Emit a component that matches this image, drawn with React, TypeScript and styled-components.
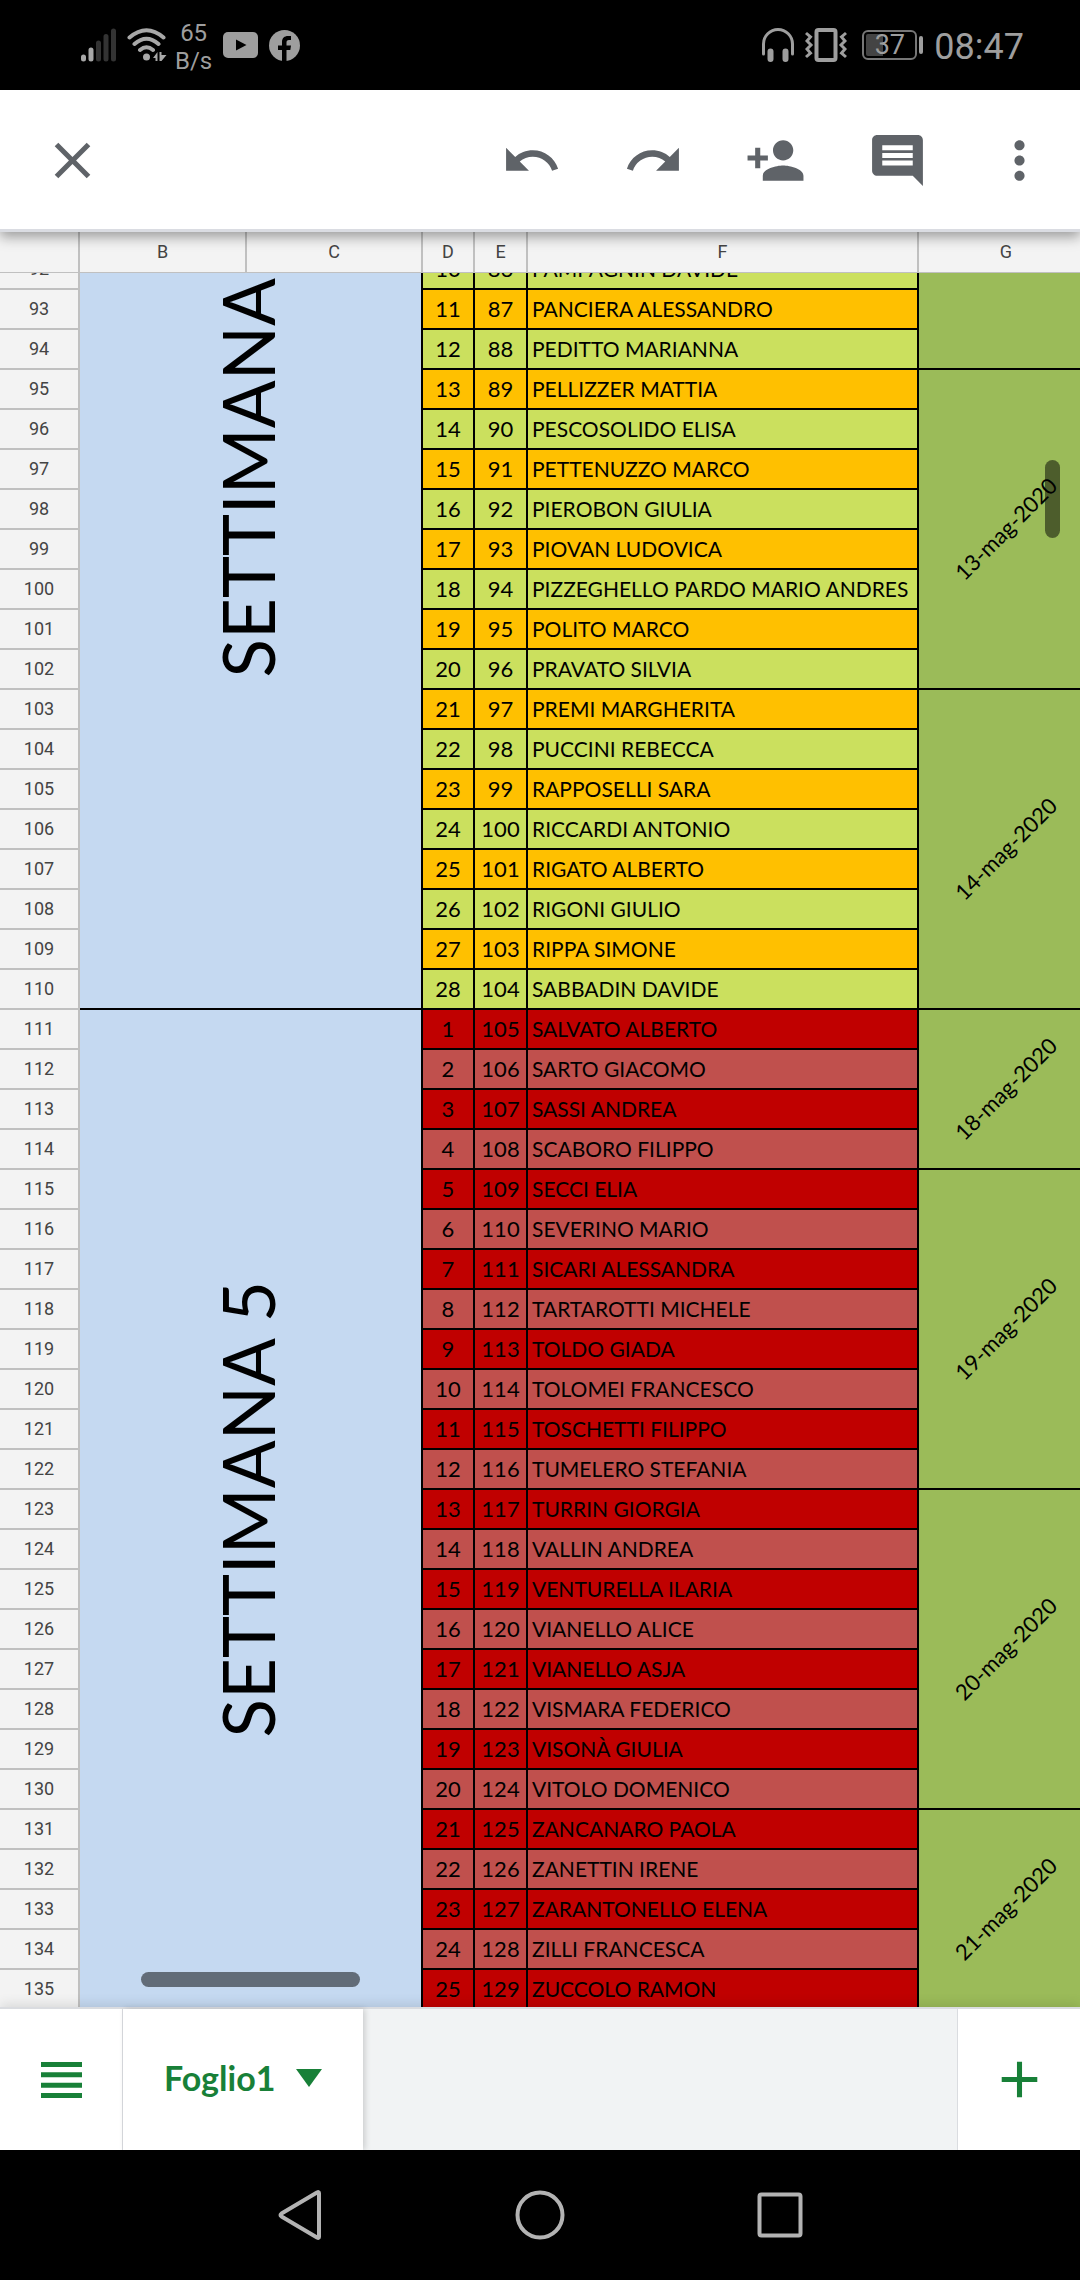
import React, { useLayoutEffect, useRef } from "react";
import styled, { createGlobalStyle } from "styled-components";
import {
  MdAdd,
  MdClose,
  MdComment,
  MdMoreVert,
  MdPersonAdd,
  MdRedo,
  MdUndo,
} from "react-icons/md";

const color = {
  icon: "#5f6368",
  accent: "#188038",
  status: "#9e9e9e",
  header: "#f3f3f3",
  headerLine: "#c0c0c0",
  week: "#c5d9f1",
  day: "#9bbb59",
};

const GlobalStyle = createGlobalStyle`
  *, *::before, *::after { box-sizing: border-box; }
  body { margin: 0; background: #000; font-family: Roboto, sans-serif; }
  button { border: 0; padding: 0; margin: 0; background: none; font: inherit; color: inherit; cursor: pointer; }
`;

const Screen = styled.div`
  display: flex;
  flex-direction: column;
  height: 100vh;
  background: #000;
`;

/* ---------- Status bar ---------- */

const StatusBar = styled.header`
  display: flex;
  flex: none;
  align-items: center;
  justify-content: space-between;
  height: 90px;
  padding: 0 56px 0 80px;
  color: ${color.status};
`;

const StatusGroup = styled.div`
  display: flex;
  align-items: center;
  gap: 11px;
`;

const NetSpeed = styled.div`
  margin-left: -3px;
  padding-top: 4px;
  font-size: 24px;
  line-height: 28px;
  text-align: center;
`;

const Battery = styled.div`
  display: flex;
  align-items: center;
  gap: 2px;
  margin-left: 4px;

  &::after {
    content: "";
    width: 4px;
    height: 18px;
    border-radius: 2px;
    background: ${color.status};
  }
`;

const BatteryBody = styled.div`
  display: flex;
  align-items: center;
  justify-content: center;
  width: 55px;
  height: 30px;
  border: 2px solid #777;
  border-radius: 6px;
  font-size: 27px;
  line-height: 30px;
  background: linear-gradient(90deg, #444 37%, transparent 37%) content-box;
  padding: 2px;
`;

const Clock = styled.time`
  padding-top: 4px;
  font-size: 36px;
  line-height: 42px;
`;

/* ---------- Toolbar ---------- */

const Toolbar = styled.nav`
  position: relative;
  z-index: 3;
  display: flex;
  flex: none;
  justify-content: space-between;
  height: 142px;
  padding-top: 2px;
  background: #fff;
  border-bottom: 3px solid #dadce2;
  color: ${color.icon};
  box-shadow: 0 5px 12px rgba(0, 0, 0, 0.36);
`;

const ToolGroup = styled.div`
  display: flex;
`;

const ToolButton = styled.button<{ $width: number }>`
  display: flex;
  align-items: center;
  justify-content: center;
  width: ${(p) => p.$width}px;

  svg {
    width: 61px;
    height: 61px;
  }
`;

/* ---------- Sheet ---------- */

const SheetFrame = styled.main`
  position: relative;
  display: flex;
  flex-direction: column;
  flex: 1;
  min-height: 0;
  overflow: hidden;
  background: #fff;
`;

const SheetScroller = styled.div`
  flex: 1;
  min-height: 0;
  overflow: auto;
  scrollbar-width: none;
`;

const Sheet = styled.table`
  width: 1095px;
  min-width: 100%;
  table-layout: fixed;
  border-collapse: separate;
  border-spacing: 0;
`;

const Column = styled.col<{ $width: number }>`
  width: ${(p) => p.$width}px;
`;

const ColumnHead = styled.th`
  height: 41px;
  padding: 0;
  background: ${color.header};
  border-right: 2px solid ${color.headerLine};
  border-bottom: 1px solid ${color.headerLine};
  color: #444;
  font: 400 18px/24px Roboto, sans-serif;
`;

const RowHead = styled.th`
  height: 40px;
  padding: 0;
  background: ${color.header};
  border-right: 2px solid ${color.headerLine};
  border-bottom: 2px solid ${color.headerLine};
  color: #444;
  font: 400 18px/24px Roboto, sans-serif;
`;

const BodyCell = styled.td`
  padding: 0;
  border-right: 2px solid #000;
  border-bottom: 2px solid #000;
  color: #000;
  font: 400 22px/28px Lato, sans-serif;
`;

const DataCell = styled(BodyCell)<{ $fill: string; $name?: boolean }>`
  background: ${(p) => p.$fill};
  text-align: ${(p) => (p.$name ? "left" : "center")};
  padding-left: ${(p) => (p.$name ? 4 : 0)}px;
  font-size: ${(p) => (p.$name ? 21 : 22)}px;
  white-space: nowrap;
`;

const WeekCell = styled(BodyCell)<{ $trailing?: number }>`
  background: ${color.week};
  vertical-align: ${(p) => (p.$trailing ? "bottom" : "middle")};
  padding-right: 6px;
  padding-bottom: ${(p) => p.$trailing ?? 0}px;
`;

const WeekLabel = styled.div`
  margin: 0 auto;
  width: 90px;
  writing-mode: vertical-rl;
  transform: rotate(180deg);
  font-size: 71px;
  line-height: 90px;
  white-space: nowrap;
`;

const DayCell = styled(BodyCell)`
  background: ${color.day};
  text-align: center;
`;

const DayLabel = styled.div`
  transform: rotate(-45deg);
  white-space: nowrap;
`;

const ScrollThumb = styled.div<{ $axis: "x" | "y" }>`
  position: absolute;
  z-index: 2;
  border-radius: 8px;
  background: rgba(0, 0, 0, 0.5);
  ${(p) =>
    p.$axis === "x"
      ? "left: 141px; bottom: 20px; width: 219px; height: 15px;"
      : "right: 20px; top: 228px; width: 15px; height: 78px;"}
`;

/* ---------- Tabs and system navigation ---------- */

const TabBar = styled.footer`
  position: relative;
  z-index: 3;
  display: flex;
  flex: none;
  height: 143px;
  border-top: 2px solid #dadce0;
  background: #f1f3f4;
  color: ${color.accent};
  box-shadow: 0 -2px 12px rgba(0, 0, 0, 0.12);
`;

const AllSheetsButton = styled.button`
  display: flex;
  align-items: center;
  justify-content: center;
  width: 123px;
  background: #fff;
  border-right: 1px solid #dadce0;
`;

const SheetTab = styled.button`
  display: flex;
  align-items: center;
  gap: 21px;
  padding: 0 41px 4px;
  background: #fff;
  box-shadow: 2px 0 6px rgba(0, 0, 0, 0.16);
  font: 700 34px/42px Lato, sans-serif;
`;

const AddSheetButton = styled.button`
  display: flex;
  align-items: center;
  justify-content: center;
  width: 123px;
  margin-left: auto;
  background: #fff;
  border-left: 1px solid #dadce0;

  svg {
    width: 61px;
    height: 61px;
  }
`;

const SystemNav = styled.nav`
  display: flex;
  flex: none;
  justify-content: center;
  height: 130px;
`;

const SystemButton = styled.button`
  display: flex;
  align-items: center;
  justify-content: center;
  width: 240px;
`;

/* ---------- Data ---------- */

const names = [
  "PAMPAGNIN DAVIDE", "PANCIERA ALESSANDRO", "PEDITTO MARIANNA", "PELLIZZER MATTIA",
  "PESCOSOLIDO ELISA", "PETTENUZZO MARCO", "PIEROBON GIULIA", "PIOVAN LUDOVICA",
  "PIZZEGHELLO PARDO MARIO ANDRES", "POLITO MARCO", "PRAVATO SILVIA", "PREMI MARGHERITA",
  "PUCCINI REBECCA", "RAPPOSELLI SARA", "RICCARDI ANTONIO", "RIGATO ALBERTO",
  "RIGONI GIULIO", "RIPPA SIMONE", "SABBADIN DAVIDE", "SALVATO ALBERTO",
  "SARTO GIACOMO", "SASSI ANDREA", "SCABORO FILIPPO", "SECCI ELIA", "SEVERINO MARIO",
  "SICARI ALESSANDRA", "TARTAROTTI MICHELE", "TOLDO GIADA", "TOLOMEI FRANCESCO",
  "TOSCHETTI FILIPPO", "TUMELERO STEFANIA", "TURRIN GIORGIA", "VALLIN ANDREA",
  "VENTURELLA ILARIA", "VIANELLO ALICE", "VIANELLO ASJA", "VISMARA FEDERICO",
  "VISONÀ GIULIA", "VITOLO DOMENICO", "ZANCANARO PAOLA", "ZANETTIN IRENE",
  "ZARANTONELLO ELENA", "ZILLI FRANCESCA", "ZUCCOLO RAMON",
];

const FIRST_ROW = 92;
const WEEK_5_ROW = 111;
const SCROLL_OFFSET = 23;
const columnWidths = [80, 167, 176, 52, 53, 391, 176];

const weeks: Record<number, { label: string; span: number; trailing?: number }> = {
  92: { label: "SETTIMANA", span: 19, trailing: 330 },
  111: { label: "SETTIMANA 5", span: 25 },
};

const days: Record<number, { label: string; span: number }> = {
  92: { label: "", span: 3 },
  95: { label: "13-mag-2020", span: 8 },
  103: { label: "14-mag-2020", span: 8 },
  111: { label: "18-mag-2020", span: 4 },
  115: { label: "19-mag-2020", span: 8 },
  123: { label: "20-mag-2020", span: 8 },
  131: { label: "21-mag-2020", span: 5 },
};

const rows = names.map((name, i) => {
  const row = FIRST_ROW + i;
  const lastWeek = row >= WEEK_5_ROW;
  const even = row % 2 === 0;
  return {
    row,
    name,
    turn: lastWeek ? row - WEEK_5_ROW + 1 : row - 82,
    order: row - 6,
    fill: lastWeek ? (even ? "#c0504d" : "#c00000") : even ? "#cbe05e" : "#ffc000",
  };
});

/* ---------- Drawings ---------- */

const SignalIcon = () => (
  <svg width="36" height="34" viewBox="0 0 36 34" strokeWidth="5" strokeLinecap="round">
    <path d="M3.5 29v2M11 22v9" stroke="#a8a8a8" />
    <path d="M18.500 15v16M26 8.500v22.500M33.500 3v28" stroke="#333" />
  </svg>
);

const WifiIcon = () => (
  <svg width="40" height="34" viewBox="0 0 40 34" fill="none" stroke="#a8a8a8" strokeWidth="4" strokeLinecap="round">
    <path d="M2.500 9.500Q19.500-5 36.500 9.500M7.500 16Q19.500 5.500 31.500 16M13 22Q19.500 16.500 26 22" />
    <circle cx="19.500" cy="29" r="3.500" fill="#a8a8a8" stroke="none" />
    <path d="M26 30L30.500 24V33H28.500V30ZM32.500 24V33H34.500L39.500 27H34.500V24Z" fill="#a8a8a8" stroke="none" />
  </svg>
);

const YouTubeIcon = () => (
  <svg width="35" height="26" viewBox="0 0 35 26">
    <rect width="35" height="26" rx="5" fill={color.status} />
    <path d="M13 7.500L23.500 13L13 18.500Z" fill="#000" />
  </svg>
);

const FacebookIcon = () => (
  <svg width="31" height="31" viewBox="0 0 31 31">
    <circle cx="15.500" cy="15.500" r="15.500" fill={color.status} />
    <path d="M13 31V20H9V15.500H13V12C13 8 15.500 6 19 6H22V10H20C18 10 17.500 11 17.500 12.500V15.500H22L21.300 20H17.500V31Z" fill="#000" />
  </svg>
);

const HeadphonesIcon = () => (
  <svg width="32" height="34" viewBox="0 0 32 34" fill="none" stroke={color.status} strokeLinecap="round">
    <path d="M1.500 26V16A14.500 14.500 0 0 1 30.500 16V26" strokeWidth="3" />
    <path d="M8.500 23.500V31M23.500 23.500V31" strokeWidth="6" />
  </svg>
);

const VibrateIcon = () => (
  <svg width="42" height="34" viewBox="0 0 42 34" fill="none" stroke={color.status} strokeWidth="3">
    <rect x="11.500" y="2" width="19" height="30" rx="2" strokeWidth="4" />
    <path d="M1 5L5.500 9L2 13L6 17L2 21L5.500 25L1 29M41 5L36.500 9L40 13L36 17L40 21L36.500 25L41 29" />
  </svg>
);

const ListIcon = () => (
  <svg width="41" height="36" viewBox="0 0 41 36" fill="none" stroke="currentColor" strokeWidth="5">
    <path d="M0 2.500H41M0 12.800H41M0 23.200H41M0 33.500H41" />
  </svg>
);

const CaretIcon = () => (
  <svg width="26" height="18" viewBox="0 0 26 18" fill="currentColor">
    <path d="M0 0H26L13 18Z" />
  </svg>
);

const navStroke = { fill: "none", stroke: "#b3b3b3", strokeWidth: 4, strokeLinejoin: "round" as const };

const SheetColumns = () => (
  <colgroup>
    {columnWidths.map((width, i) => (
      <Column key={i} $width={width} />
    ))}
  </colgroup>
);

export default function App() {
  const scroller = useRef<HTMLDivElement>(null);

  useLayoutEffect(() => {
    if (scroller.current) scroller.current.scrollTop = SCROLL_OFFSET;
  }, []);

  return (
    <Screen>
      <GlobalStyle />
      <StatusBar>
        <StatusGroup>
          <SignalIcon />
          <WifiIcon />
          <NetSpeed>
            65
            <br />
            B/s
          </NetSpeed>
          <YouTubeIcon />
          <FacebookIcon />
        </StatusGroup>
        <StatusGroup>
          <HeadphonesIcon />
          <VibrateIcon />
          <Battery>
            <BatteryBody>37</BatteryBody>
          </Battery>
          <Clock>08:47</Clock>
        </StatusGroup>
      </StatusBar>

      <Toolbar>
        <ToolButton $width={144} aria-label="Chiudi"><MdClose /></ToolButton>
        <ToolGroup>
          <ToolButton $width={122} aria-label="Annulla"><MdUndo /></ToolButton>
          <ToolButton $width={122} aria-label="Ripeti"><MdRedo /></ToolButton>
          <ToolButton $width={122} aria-label="Condividi"><MdPersonAdd /></ToolButton>
          <ToolButton $width={122} aria-label="Commenti"><MdComment /></ToolButton>
          <ToolButton $width={122} aria-label="Altro"><MdMoreVert /></ToolButton>
        </ToolGroup>
      </Toolbar>

      <SheetFrame>
        <Sheet>
          <SheetColumns />
          <thead>
            <tr>
              {["", "B", "C", "D", "E", "F", "G"].map((letter) => (
                <ColumnHead key={letter} scope="col">{letter}</ColumnHead>
              ))}
            </tr>
          </thead>
        </Sheet>
        <SheetScroller ref={scroller}>
          <Sheet>
            <SheetColumns />
            <tbody>
              {rows.map(({ row, name, turn, order, fill }) => (
                <tr key={row}>
                  <RowHead scope="row">{row}</RowHead>
                  {weeks[row] && (
                    <WeekCell colSpan={2} rowSpan={weeks[row].span} $trailing={weeks[row].trailing}>
                      <WeekLabel>{weeks[row].label}</WeekLabel>
                    </WeekCell>
                  )}
                  <DataCell $fill={fill}>{turn}</DataCell>
                  <DataCell $fill={fill}>{order}</DataCell>
                  <DataCell $fill={fill} $name>{name}</DataCell>
                  {days[row] && (
                    <DayCell rowSpan={days[row].span}>
                      <DayLabel>{days[row].label}</DayLabel>
                    </DayCell>
                  )}
                </tr>
              ))}
            </tbody>
          </Sheet>
        </SheetScroller>
        <ScrollThumb $axis="x" />
        <ScrollThumb $axis="y" />
      </SheetFrame>

      <TabBar>
        <AllSheetsButton aria-label="Tutti i fogli"><ListIcon /></AllSheetsButton>
        <SheetTab>
          Foglio1
          <CaretIcon />
        </SheetTab>
        <AddSheetButton aria-label="Aggiungi foglio"><MdAdd /></AddSheetButton>
      </TabBar>

      <SystemNav>
        <SystemButton aria-label="Indietro">
          <svg width="44" height="50" viewBox="0 0 44 50" {...navStroke}>
            <path d="M41 3V47Q41 48.500 39 47.500L3.500 26.500Q1.500 25 3.500 23.500L39 2.500Q41 1.500 41 3Z" />
          </svg>
        </SystemButton>
        <SystemButton aria-label="Home">
          <svg width="50" height="50" viewBox="0 0 50 50" {...navStroke}>
            <circle cx="25" cy="25" r="22.500" />
          </svg>
        </SystemButton>
        <SystemButton aria-label="Recenti">
          <svg width="46" height="46" viewBox="0 0 46 46" {...navStroke}>
            <rect x="2.500" y="2.500" width="41" height="41" rx="2" />
          </svg>
        </SystemButton>
      </SystemNav>
    </Screen>
  );
}
